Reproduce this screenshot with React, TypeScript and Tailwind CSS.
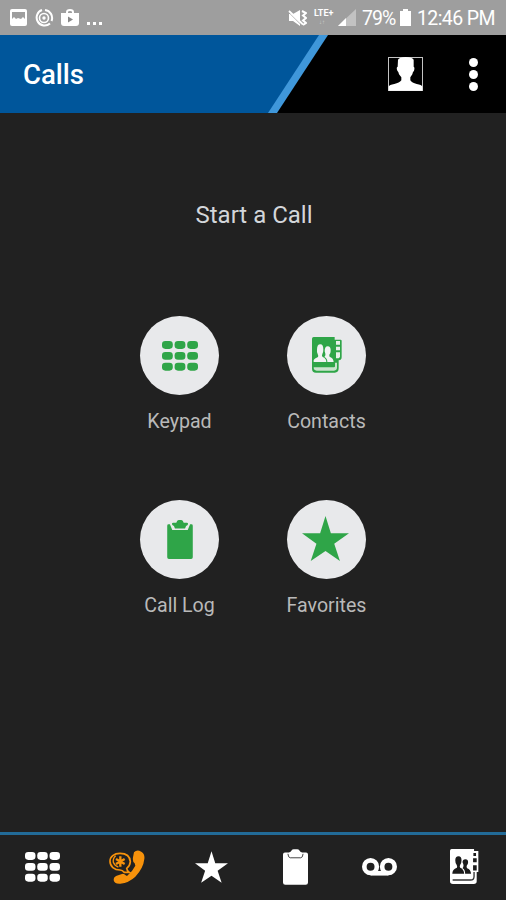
import type { ReactNode } from 'react';

const KeypadIcon = ({ className }: { className: string }) => (
  <svg viewBox="0 0 107 91" preserveAspectRatio="none" className={className} fill="currentColor">
    {[0, 33, 66].map((y) =>
      [0, 37.5, 75].map((x) => <rect key={`${x}-${y}`} x={x} y={y} width="32" height="24" rx="10" />)
    )}
  </svg>
);

const StarIcon = ({ className }: { className: string }) => (
  <svg viewBox="0 0 140 134" className={className} fill="currentColor">
    <path d="M70 0 86 51 140 51 96 83 113 134 70 104 26 134 43 83 0 51 54 51Z" />
  </svg>
);

const ClipboardIcon = ({ className }: { className: string }) => (
  <svg viewBox="0 0 76 116" className={className} fill="currentColor">
    <path d="M4 13H8L15 30H61L68 13H72Q76 13 76 17V111Q76 116 71 116H5Q0 116 0 111V17Q0 13 4 13Z" />
    <path d="M14 12Q14 8 18 8H27Q29 0 34 0H42Q47 0 49 8H58Q62 8 62 12Q61 17 56 18L53 25H23L20 18Q15 17 14 12Z" />
  </svg>
);

const NavClipboardIcon = () => (
  <svg viewBox="0 0 76 108" className="h-9 w-[25px]">
    <path d="M6 10H18Q24 9 26 4Q28 0 33 0H43Q48 0 50 4Q52 9 58 10H70Q76 10 76 16V101Q76 108 69 108H7Q0 108 0 101V16Q0 10 6 10Z" fill="#fff" />
    <path d="M15 14Q16 26 22 26H54Q60 26 61 14" fill="none" stroke="#444" strokeWidth="3" />
  </svg>
);

const ContactsIcon = () => (
  <svg viewBox="0 0 90 108" className="h-9 w-[30px] text-[#2fa548]">
    <path d="M5 0H68V8H86Q89 8 89 12V60Q89 70 80 70V94Q80 107 68 107H12Q0 107 0 95V5Q0 0 5 0Z" fill="currentColor" />
    <path d="M5 75V69Q7 64 18 60Q20 57 17 51Q14 46 15 38Q15 22 25 22Q34 22 34 38Q34 46 31 51Q28 57 32 60Q43 64 43 75Z" fill="#f2f3f4" />
    <path d="M46 75Q46 64 37 60Q43 56 38 43Q38 28 47 28Q57 28 56 42Q56 49 52 53Q51 58 54 60Q64 63 65 75Z" fill="#f2f3f4" />
    <path d="M72 12H84V23H72ZM72 29H84V40H72ZM72 46H84V60L80 64H72Z" fill="#e8f1e9" />
    <path d="M5 91H66Q69 91 69 88V77H75V91Q75 101 66 101H14Q5 101 5 91Z" fill="#cbe3ce" />
  </svg>
);

const NavContactsIcon = () => (
  <svg viewBox="0 0 88 106" className="ml-0.5 h-[35px] w-[29px]">
    <path d="M5 0H73V6H86V70H81V98Q81 106 72 106H9Q0 106 0 98V5Q0 0 5 0Z" fill="#fff" />
    <g fill="#1b1b1b">
      <path d="M7 75Q7 62 21 57Q23 53 20 48Q16 43 16 34Q16 22 26 22Q35 22 35 34Q35 43 31 48Q28 53 31 57Q42 61 43 75Z" />
      <path d="M46 75Q46 62 38 58Q44 51 38 40Q38 31 47 31Q55 31 55 40Q55 46 51 50Q49 55 52 58Q63 62 64 75Z" />
      <path d="M71 12H79V21H71ZM70 28H81V40H70ZM70 49H81V65H70Z" />
    </g>
    <path d="M8 94H62Q73 94 73 83V70" fill="none" stroke="#333" strokeWidth="4" />
  </svg>
);

const PhoneIcon = () => (
  <svg viewBox="0 0 108 102" className="h-[34px] w-9">
    <path d="M75 7Q82-1 91 2L98 6Q108 12 106 27Q103 55 79 80Q60 98 34 101Q15 102 14 90Q14 80 23 77L39 72Q45 70 50 76L54 78Q70 65 79 47L77 40Q70 35 72 22Z" fill="#f7920b" />
    <g fill="none" stroke="#f7920b">
      <path d="M53 55Q63 48 64 35C63 19 51 10 33 10C15 10 3 20 3 34C3 49 16 60 33 60Q40 60 46 67H61Q53 62 53 55Z" strokeWidth="5" />
      <path d="M20 17Q11 25 13 37Q17 48 28 51" strokeWidth="4" />
      <path d="M34 19V50M21 27 47 42M21 42 47 27" strokeWidth="7" />
    </g>
  </svg>
);

const VoicemailIcon = () => (
  <svg viewBox="0 0 106 54" className="h-[18px] w-[35px]">
    <g fill="none" stroke="#fff" strokeWidth="14">
      <circle cx="26" cy="26" r="19" />
      <circle cx="80" cy="26" r="19" />
      <path d="M26 46H80" />
    </g>
  </svg>
);

const PersonIcon = () => (
  <svg viewBox="0 0 105 102" className="h-[34px] w-[35px]">
    <rect x="1.5" y="1.5" width="102" height="99" fill="none" stroke="#c4c4c4" strokeWidth="3" />
    <path d="M30 8Q35 1 53 0Q72 1 77 8V29Q81 31 78 41Q74 44 73 52L67 61V70Q72 78 86 81Q101 83 103 89V101H2V89Q4 83 19 81Q34 78 40 70V61L33 52Q32 44 28 41Q24 31 29 29Z" fill="#fff" />
  </svg>
);

const StatusBar = () => (
  <div className="flex h-[35px] items-center bg-[#9e9e9e] pr-[10px] pl-[10px] text-white">
    <svg viewBox="0 0 17 17" className="h-[17px] w-[17px]">
      <rect width="17" height="17" rx="2" fill="#fff" />
      <path d="M2 3H15V10L13 8 11 10 8 9 6 10 4 8 2 10Z" fill="#9e9e9e" />
    </svg>
    <svg viewBox="0 0 20 20" className="ml-[7px] h-5 w-5" fill="none" stroke="#fff">
      <path d="M8 2A8 8 0 1 0 16 15.500M11 2A8 8 0 0 1 17.500 13" strokeWidth="2" />
      <circle cx="10" cy="10" r="4.5" strokeWidth="1.6" />
      <circle cx="10" cy="10" r="1.7" fill="#fff" stroke="none" />
    </svg>
    <svg viewBox="0 0 18 18" className="ml-[7px] h-[18px] w-[18px]">
      <path d="M6 5V3Q6 1 9 1Q12 1 12 3V5" fill="none" stroke="#fff" strokeWidth="2" />
      <path d="M0 4H18V14Q18 17 15 17H3Q0 17 0 14Z" fill="#fff" />
      <path d="M7 7.500 12 10.500 7 13.500Z" fill="#888" />
    </svg>
    <svg viewBox="0 0 16 18" className="ml-2 h-[18px] w-4" fill="#fff">
      <path d="M0 13H3V16H0ZM6 13H9V16H6ZM12 13H15V16H12Z" />
    </svg>
    <svg viewBox="0 0 19 18" className="ml-auto h-[18px] w-[19px]">
      <path d="M1 5H5L12 1V17L5 12H1Z" fill="#fff" />
      <path d="M14 2 18 4 15 6.500 18 9 15 11.500 18 14 15 16" fill="none" stroke="#fff" strokeWidth="2" />
      <path d="M1 3.500 14 16.500" stroke="#9e9e9e" strokeWidth="1" />
      <path d="M1 2 15 15.500" stroke="#fff" strokeWidth="1.8" />
    </svg>
    <div className="ml-[7px] flex h-5 w-[22px] flex-col">
      <span className="text-[9px] leading-[11px] font-bold">LTE+</span>
      <span className="pl-[5px] text-[6px] leading-[6px] text-[#cfcfcf]">↓↑</span>
    </div>
    <svg viewBox="0 0 18 17" className="ml-0.5 h-[17px] w-[18px]">
      <path d="M0 17 18 0V17Z" fill="#c2c2c2" />
      <path d="M0 17 8 9V17Z" fill="#fff" />
    </svg>
    <span className="ml-[6px] w-[36px] pt-0.5 text-[19.5px] tracking-[-1px]">79%</span>
    <svg viewBox="0 0 11 17" className="ml-0.5 h-[17px] w-[11px]" fill="#fff">
      <path d="M3 0H8V2H11V17H0V2H3Z" />
    </svg>
    <span className="ml-[6px] w-[79px] pt-0.5 text-[19.5px] tracking-[-0.6px] whitespace-nowrap">12:46 PM</span>
  </div>
);

const Header = () => (
  <header className="flex h-[78px] bg-black">
    <div className="h-full w-[328px] shrink-0 bg-[#3f97da] [clip-path:polygon(0_0,100%_0,277px_100%,0_100%)]">
      <div className="flex h-full w-[319px] items-center bg-[#00569b] pl-[23px] [clip-path:polygon(0_0,100%_0,268px_100%,0_100%)]">
        <h1 className="pt-0.5 text-[27.5px] font-medium text-white">Calls</h1>
      </div>
    </div>
    <div className="flex flex-1 items-center justify-between pr-[28px] pl-[60px]">
      <PersonIcon />
      <div className="flex flex-col gap-[3px]">
        <span className="h-[9px] w-[9px] rounded-full bg-white" />
        <span className="h-[9px] w-[9px] rounded-full bg-white" />
        <span className="h-[9px] w-[9px] rounded-full bg-white" />
      </div>
    </div>
  </header>
);

const CallOption = ({ label, children }: { label: string; children: ReactNode }) => (
  <div className="flex h-[184px] flex-col items-center">
    <div className="flex h-[79px] w-[79px] items-center justify-center rounded-full bg-[#e8e9eb] text-[#2fa548]">
      {children}
    </div>
    <span className="mt-[13px] text-[19.6px] leading-7 text-[#b9b9b9]">{label}</span>
  </div>
);

const App = () => (
  <div className="flex h-[900px] w-[506px] flex-col overflow-hidden bg-[#212121] font-[Roboto,sans-serif]">
    <StatusBar />
    <Header />
    <main className="flex-1">
      <h2 className="mt-[86px] pl-0.5 text-center text-[24px] leading-8 text-[#d3d6da]">Start a Call</h2>
      <div className="mt-[84.5px] ml-[106px] grid w-[294px] grid-cols-2">
        <CallOption label="Keypad">
          <KeypadIcon className="mt-0.5 h-[30px] w-9" />
        </CallOption>
        <CallOption label="Contacts">
          <ContactsIcon />
        </CallOption>
        <CallOption label="Call Log">
          <ClipboardIcon className="h-[39px] w-[26px]" />
        </CallOption>
        <CallOption label="Favorites">
          <StarIcon className="mr-0.5 mb-0.5 h-[45px] w-[47px]" />
        </CallOption>
      </div>
    </main>
    <nav className="grid h-[68px] grid-cols-6 items-center justify-items-center border-t-[3px] border-[#226b98] pb-0.5 pl-px text-white">
      <KeypadIcon className="mr-px h-[30px] w-[35px]" />
      <PhoneIcon />
      <StarIcon className="h-8 w-[33px]" />
      <NavClipboardIcon />
      <VoicemailIcon />
      <NavContactsIcon />
    </nav>
  </div>
);

export default App;
